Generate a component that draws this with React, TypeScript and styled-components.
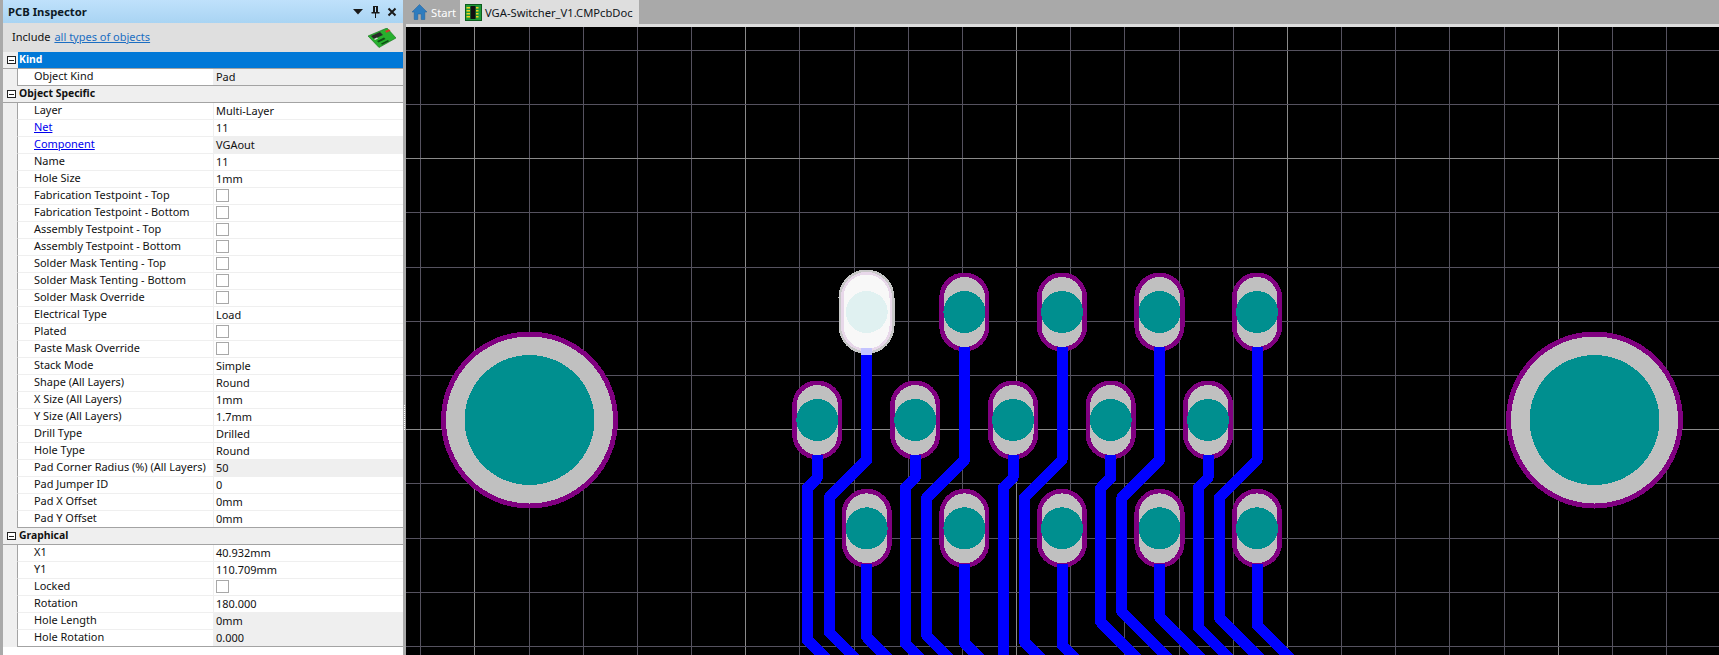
import React from "react";
import styled, { createGlobalStyle } from "styled-components";

const Global = createGlobalStyle`
  html, body { margin: 0; padding: 0; background: #a9a9a9; }
  #root { width: 100%; height: 100vh; overflow: hidden; }
  * { box-sizing: border-box; }
`;

const Shell = styled.div`
  display: flex;
  width: 100%;
  height: 100%;
  font-family: "Noto Sans", "Open Sans", sans-serif;
  font-size: 10.95px;
  color: #111;
`;

const Panel = styled.aside`
  width: 403px;
  flex: none;
  height: 100%;
  border-left: 3px solid #a9a9a9;
  background: #fff;
  display: flex;
  flex-direction: column;
  overflow: hidden;
`;

const PanelHeader = styled.header`
  height: 23px;
  flex: none;
  display: flex;
  align-items: center;
  justify-content: space-between;
  padding: 0 6px 0 5px;
  background: linear-gradient(#bfe1fb, #a9d4f3);
`;

const PanelTitle = styled.h1`
  margin: 0;
  font-size: 11.3px;
  font-weight: 700;
  color: #0d1a26;
`;

const HeaderIcons = styled.div`
  display: flex;
  align-items: center;
  gap: 7px;
`;

const IncludeBar = styled.div`
  height: 29px;
  flex: none;
  display: flex;
  align-items: center;
  justify-content: space-between;
  padding: 0 7px 0 9px;
  background: #dfdfdf;
  font-size: 11px;
`;

const IncludeText = styled.span`
  display: flex;
  gap: 4px;
  padding-bottom: 2px;
`;

const Link = styled.a`
  color: #1b6ec2;
  text-decoration: underline;
`;

const SectionHead = styled.div`
  height: 17px;
  display: flex;
  align-items: center;
  border-bottom: 1px solid #a3a3a3;
  background: #efefef;
  font-weight: 700;
  font-size: 10.4px;
`;

const Toggle = styled.span`
  width: 9px;
  height: 8px;
  margin: 0 2px 0 4px;
  flex: none;
  border: 1px solid #222;
  background: #fff;
  display: flex;
  align-items: center;
  justify-content: center;
  &::after {
    content: "";
    width: 5px;
    height: 1px;
    background: #222;
  }
`;

const SectionTitle = styled.div<{ $selected?: boolean }>`
  flex: 1;
  height: 16px;
  line-height: 14px;
  padding-left: 1px;
  background: ${(p) => (p.$selected ? "#0078d7" : "transparent")};
  color: ${(p) => (p.$selected ? "#fff" : "#111")};
`;

const Rows = styled.div`
  background: #efefef;
  padding-left: 14px;
`;

const Row = styled.div<{ $last?: boolean }>`
  height: 17px;
  display: grid;
  grid-template-columns: 195px 1fr;
  border-left: 1px solid #a3a3a3;
  border-bottom: 1px solid ${(p) => (p.$last ? "#a3a3a3" : "#efefef")};
  background: #fff;
`;

const LabelCell = styled.div`
  padding-left: 16px;
  line-height: 14px;
  white-space: nowrap;
`;

const LinkLabel = styled.a`
  color: #0000ee;
  text-decoration: underline;
`;

const ValueCell = styled.div<{ $readonly?: boolean }>`
  padding: 0 0 1px 2px;
  line-height: 14px;
  border-left: 1px solid #efefef;
  background: ${(p) => (p.$readonly ? "#efefef" : "#fff")};
  white-space: nowrap;
  display: flex;
  align-items: center;
`;

const Check = styled.span`
  width: 13px;
  height: 13px;
  background: #fff;
  border: 1px solid #a8a8a8;
`;

const Splitter = styled.div`
  width: 3px;
  flex: none;
  background: #a9a9a9;
  position: relative;
  &::after {
    content: "";
    position: absolute;
    left: 1px;
    top: 405px;
    width: 1px;
    height: 25px;
    background: repeating-linear-gradient(#fff 0 1px, transparent 1px 2px);
  }
`;

const Workspace = styled.main`
  flex: 1;
  min-width: 0;
  display: flex;
  flex-direction: column;
`;

const TabBar = styled.nav`
  height: 27px;
  flex: none;
  display: flex;
  background: #a9a9a9;
  border-bottom: 3px solid #dedede;
`;

const StartTab = styled.div`
  width: 54px;
  height: 24px;
  display: flex;
  align-items: center;
  gap: 4px;
  padding-left: 6px;
  color: #fff;
  font-size: 11.2px;
`;

const DocTab = styled.div`
  height: 24px;
  display: flex;
  align-items: center;
  gap: 3px;
  padding: 0 6px 0 5px;
  background: #dedede;
  color: #10151a;
  font-size: 11.2px;
`;

const Canvas = styled.div`
  flex: 1;
  min-height: 0;
  background: #000;
  svg { display: block; }
`;

type Prop = { label: string; value?: string; check?: boolean; link?: boolean; readonly?: boolean };

const objectSpecific: Prop[] = [
  { label: "Layer", value: "Multi-Layer" },
  { label: "Net", value: "11", link: true },
  { label: "Component", value: "VGAout", link: true, readonly: true },
  { label: "Name", value: "11" },
  { label: "Hole Size", value: "1mm" },
  { label: "Fabrication Testpoint - Top", check: true },
  { label: "Fabrication Testpoint - Bottom", check: true },
  { label: "Assembly Testpoint - Top", check: true },
  { label: "Assembly Testpoint - Bottom", check: true },
  { label: "Solder Mask Tenting - Top", check: true },
  { label: "Solder Mask Tenting - Bottom", check: true },
  { label: "Solder Mask Override", check: true },
  { label: "Electrical Type", value: "Load" },
  { label: "Plated", check: true },
  { label: "Paste Mask Override", check: true },
  { label: "Stack Mode", value: "Simple" },
  { label: "Shape (All Layers)", value: "Round" },
  { label: "X Size (All Layers)", value: "1mm" },
  { label: "Y Size (All Layers)", value: "1.7mm" },
  { label: "Drill Type", value: "Drilled" },
  { label: "Hole Type", value: "Round" },
  { label: "Pad Corner Radius (%) (All Layers)", value: "50", readonly: true },
  { label: "Pad Jumper ID", value: "0" },
  { label: "Pad X Offset", value: "0mm" },
  { label: "Pad Y Offset", value: "0mm" },
];

const graphical: Prop[] = [
  { label: "X1", value: "40.932mm" },
  { label: "Y1", value: "110.709mm" },
  { label: "Locked", check: true },
  { label: "Rotation", value: "180.000" },
  { label: "Hole Length", value: "0mm", readonly: true },
  { label: "Hole Rotation", value: "0.000", readonly: true },
];

const PropRows = ({ items }: { items: Prop[] }) => (
  <Rows>
    {items.map((it, i) => (
      <Row key={it.label} $last={i === items.length - 1}>
        <LabelCell>{it.link ? <LinkLabel href="#">{it.label}</LinkLabel> : it.label}</LabelCell>
        <ValueCell $readonly={it.readonly}>{it.check ? <Check /> : it.value}</ValueCell>
      </Row>
    ))}
  </Rows>
);

const VX = [420, 474, 529, 583, 637, 691, 745, 799, 854, 908, 962, 1016, 1070, 1124, 1179, 1233, 1287, 1341, 1395, 1449, 1504, 1558, 1612, 1666];
const HY = [50, 104, 158, 212, 267, 321, 375, 429, 483, 538, 592, 646];
const MAJOR_X = [474, 745, 1016, 1287, 1558];
const MAJOR_Y = [158, 429];

const TOP_X = [866.7, 964.4, 1062, 1159.5, 1257];
const MID_X = [817.3, 915.2, 1013, 1110.7, 1208];
const Y_TOP = [632, 636, 642, 612, 618];
const Y_MID = [640, 643, 720, 622, 627];
const Y_BOT = [637, 643, 645, 617, 625];

const Pad = ({ x, y }: { x: number; y: number }) => (
  <g>
    <rect x={x - 22.8} y={y - 37.2} width={45.6} height={74.4} rx={22.8} fill="#c0c0c0" stroke="#800080" strokeWidth={4.6} />
    <circle cx={x} cy={y} r={21} fill="#008f8f" />
  </g>
);

const BigPad = ({ x }: { x: number }) => (
  <g>
    <circle cx={x} cy={420} r={86} fill="#c0c0c0" stroke="#800080" strokeWidth={5} />
    <circle cx={x} cy={420} r={65} fill="#008f8f" />
  </g>
);

const Trace = ({ pts }: { pts: number[][] }) => (
  <polyline
    points={pts.map((p) => p.join(",")).join(" ")}
    fill="none"
    stroke="#0000ff"
    strokeWidth={11}
    strokeLinejoin="round"
  />
);

const Board = () => (
  <svg width={1313} height={628} viewBox="406 27 1313 628" shapeRendering="crispEdges">
    {VX.map((x) => (
      <rect key={x} x={x} y={27} width={1} height={628} fill={MAJOR_X.includes(x) ? "#8a8a8a" : "#55525f"} />
    ))}
    {HY.map((y) => (
      <rect key={y} x={406} y={y} width={1313} height={1} fill={MAJOR_Y.includes(y) ? "#8a8a8a" : "#55525f"} />
    ))}
    <BigPad x={529.5} />
    <BigPad x={1594.5} />
    {TOP_X.map((x, i) => (i > 0 ? <Pad key={x} x={x} y={312} /> : null))}
    {MID_X.map((x) => (
      <Pad key={x} x={x} y={420} />
    ))}
    {TOP_X.map((x) => (
      <Pad key={x} x={x} y={528.3} />
    ))}
    {TOP_X.map((x, i) => (
      <g key={x}>
        <Trace pts={[[x, 347], [x, 460], [x - 37.6, 497.6], [x - 37.6, Y_TOP[i]], [x + 12.4, Y_TOP[i] + 50]]} />
        <Trace pts={[[MID_X[i], 455], [MID_X[i], 478], [MID_X[i] - 10, 488], [MID_X[i] - 10, Y_MID[i]], [MID_X[i] + 40, Y_MID[i] + 50]]} />
        <Trace pts={[[x, 564], [x, Y_BOT[i]], [x + 50, Y_BOT[i] + 50]]} />
      </g>
    ))}
    <rect x={838.5} y={269.5} width={56} height={84.5} rx={28} fill="#c8c8c8" />
    <rect x={841} y={272} width={51} height={79.5} rx={25.5} fill="#e8d8ea" />
    <rect x={843.5} y={274.5} width={46} height={74.5} rx={23} fill="#f8f8f8" />
    <circle cx={866.7} cy={312} r={21} fill="#e0f1f1" />
    <rect x={861} y={348} width={11} height={7} fill="#c4c4ff" />
  </svg>
);

const ChevronIcon = () => (
  <svg width="11" height="7" viewBox="0 0 11 7"><path d="M0 1h10L5 6.5z" fill="#1a1a1a" /></svg>
);
const PinIcon = () => (
  <svg width="9" height="13" viewBox="0 0 9 13">
    <path d="M2 1h5v6h1.500v1.500H5V13H4V8.500H.5V7H2z M4 2v5h1V2z" fill="#1a1a1a" fillRule="evenodd" />
  </svg>
);
const CloseIcon = () => (
  <svg width="10" height="10" viewBox="0 0 10 10"><path d="M1.500 1.500l7 7M8.500 1.500l-7 7" stroke="#1a1a1a" strokeWidth="2" /></svg>
);
const HomeIcon = () => (
  <svg width="15" height="16" viewBox="0 0 15 16">
    <path d="M7.500.5L15 8h-2.200v7.500H9.200V10H5.800v5.500H2.200V8H0z" fill="#2e7cbf" stroke="#1d5f9a" strokeWidth=".5" />
  </svg>
);
const DocIcon = () => (
  <svg width="17" height="17" viewBox="0 0 17 17">
    <rect x="0.500" y="0.500" width="16" height="16" fill="#1f9a3a" stroke="#0c5c1e" />
    <rect x="5.500" y="2" width="5" height="13" fill="#111" />
    <path d="M1.500 3h3.500v1.500h-3.500zM1.500 6h3.500v1.500h-3.500zM1.500 9h3.500v1.500h-3.500zM1.500 12h3.500v1.500h-3.500zM11 3h2.500v1.500H11zM11 6h2.500v1.500H11zM11 9h2.500v1.500H11zM11 12h2.500v1.500H11z" fill="#f2d21f" />
  </svg>
);
const BoardIcon = () => (
  <svg width="28" height="20" viewBox="0 0 28 20">
    <path d="M0 8L19 0l9 10-17 9.500z" fill="#27b02e" stroke="#12701a" strokeWidth=".6" />
    <path d="M3 8l9-4 3 3-9 4z" fill="#2a2a2a" />
    <path d="M9 13l7-3.500 1.500 1.500-7 3.500zM13 15.500l7-3.500 1 1.200-7 3.500z" fill="#0f4f14" />
    <path d="M17 3l4-1.800 1.500 1.500-4 2z" fill="#d2392e" />
    <path d="M6 11l3-1.500 1 1-3 1.500z" fill="#d8d8d8" />
  </svg>
);

export default function App() {
  return (
    <>
      <Global />
      <Shell>
        <Panel>
          <PanelHeader>
            <PanelTitle>PCB Inspector</PanelTitle>
            <HeaderIcons>
              <ChevronIcon />
              <PinIcon />
              <CloseIcon />
            </HeaderIcons>
          </PanelHeader>
          <IncludeBar>
            <IncludeText>
              Include <Link href="#">all types of objects</Link>
            </IncludeText>
            <BoardIcon />
          </IncludeBar>
          <SectionHead>
            <Toggle />
            <SectionTitle $selected>Kind</SectionTitle>
          </SectionHead>
          <PropRows items={[{ label: "Object Kind", value: "Pad", readonly: true }]} />
          <SectionHead>
            <Toggle />
            <SectionTitle>Object Specific</SectionTitle>
          </SectionHead>
          <PropRows items={objectSpecific} />
          <SectionHead>
            <Toggle />
            <SectionTitle>Graphical</SectionTitle>
          </SectionHead>
          <PropRows items={graphical} />
        </Panel>
        <Splitter />
        <Workspace>
          <TabBar>
            <StartTab>
              <HomeIcon />
              Start
            </StartTab>
            <DocTab>
              <DocIcon />
              VGA-Switcher_V1.CMPcbDoc
            </DocTab>
          </TabBar>
          <Canvas>
            <Board />
          </Canvas>
        </Workspace>
      </Shell>
    </>
  );
}
